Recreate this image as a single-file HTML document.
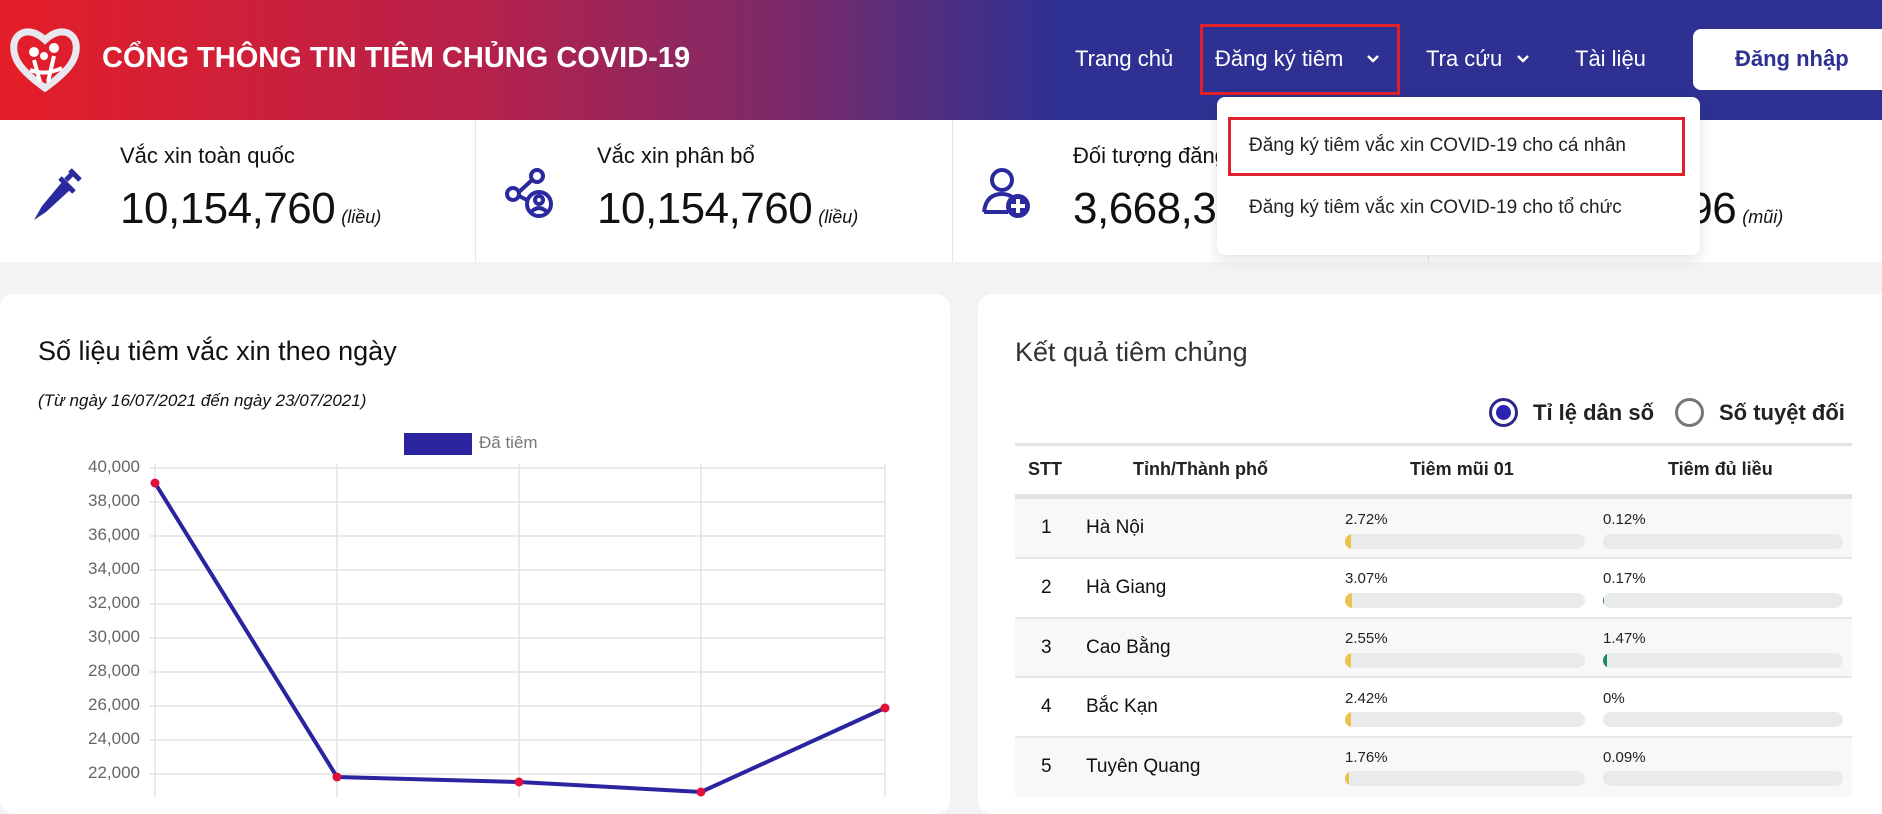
<!DOCTYPE html>
<html><head><meta charset="utf-8"><style>
*{margin:0;padding:0;box-sizing:border-box}
body{width:1882px;height:797px;overflow:hidden;background:#f3f3f5;font-family:"Liberation Sans",sans-serif;position:relative;color:#111}
.abs{position:absolute;white-space:nowrap}
.hdr{position:absolute;left:0;top:0;width:1882px;height:120px;background:linear-gradient(90deg,#e41e28 0%,#b8214a 25%,#7a2a6a 42%,#2e3192 56%,#2e3192 100%)}
.nav{color:#fff;font-size:22px;top:46px}
.stats{position:absolute;left:0;top:120px;width:1882px;height:142px;background:#fff}
.sep{position:absolute;top:0;width:1px;height:142px;background:#e6e6e6}
.lbl{font-size:22px;top:143px;color:#111}
.num{font-size:44px;top:184px;color:#111;letter-spacing:-0.5px}
.num i{font-size:18px;letter-spacing:0;margin-left:6px}
.card{position:absolute;background:#fff;border-radius:14px}
.yl{font-size:17px;color:#666;width:100px;text-align:right;left:40px}
.th{font-size:18px;font-weight:bold;top:459px;color:#222}
.pct{font-size:15px;color:#222}
.bar{position:absolute;height:15px;width:240px;background:#e9eaec;border-radius:8px;overflow:hidden}
.bar b{position:absolute;left:0;top:0;height:15px;border-radius:8px 0 0 8px}
</style></head><body>
<div class="hdr"></div>
<svg class="abs" style="left:10px;top:26px" width="70" height="66" viewBox="0 0 70 66">
<path d="M35 62 C10 44 2 32 4 18 C6 6 20 0 35 14 C50 0 64 6 66 18 C68 32 60 44 35 62Z" fill="none" stroke="#e8e8ee" stroke-width="7"/>
<circle cx="24" cy="26" r="5" fill="#fff"/><circle cx="44" cy="22" r="5" fill="#fff"/><circle cx="34" cy="30" r="4" fill="#fff"/>
<path d="M24 34 L30 56 M44 30 L38 56 M20 44 Q35 50 52 42" stroke="#fff" stroke-width="4" fill="none"/>
</svg>
<div class="abs" style="left:102px;top:42px;color:#fff;font-size:29px;font-weight:bold">CỔNG THÔNG TIN TIÊM CHỦNG COVID-19</div>
<div class="abs nav" style="left:1075px">Trang chủ</div>
<div class="abs nav" style="left:1215px">Đăng ký tiêm</div>
<div class="abs" style="left:1200px;top:24px;width:200px;height:71px;border:3px solid #e0202a"></div>
<div class="abs nav" style="left:1426px">Tra cứu</div>
<div class="abs nav" style="left:1575px">Tài liệu</div>
<svg class="abs" style="left:1366px;top:54px" width="14" height="10"><path d="M2 2 L7 7 L12 2" stroke="#fff" stroke-width="2.5" fill="none"/></svg>
<svg class="abs" style="left:1516px;top:54px" width="14" height="10"><path d="M2 2 L7 7 L12 2" stroke="#fff" stroke-width="2.5" fill="none"/></svg>
<div class="abs" style="left:1693px;top:29px;width:200px;height:61px;background:#fff;border-radius:8px;color:#2e3192;font-size:22px;font-weight:bold;padding:17px 0 0 42px">Đăng nhập</div>

<div class="stats">
<div class="sep" style="left:475px"></div><div class="sep" style="left:952px"></div><div class="sep" style="left:1428px"></div>
</div>
<svg class="abs" style="left:26px;top:166px" width="58" height="58" viewBox="0 0 58 58"><path d="M8 54 L16 40 L36 16 L44 24 L20 46 Z" fill="#2a2a9e"/><path d="M34 12 L48 26 M40 14 L46 8 M44 4 L54 14" stroke="#2a2a9e" stroke-width="5" fill="none"/></svg>
<div class="abs lbl" style="left:120px">Vắc xin toàn quốc</div>
<div class="abs num" style="left:120px">10,154,760<i>(liều)</i></div>
<svg class="abs" style="left:503px;top:166px" width="56" height="56" viewBox="0 0 56 56" fill="none" stroke="#2a2a9e" stroke-width="4"><circle cx="34" cy="10" r="6"/><circle cx="10" cy="28" r="6"/><circle cx="36" cy="38" r="12"/><circle cx="36" cy="34" r="4"/><path d="M28 46 Q36 38 44 46"/><path d="M16 26 L29 14 M16 30 L24 34"/></svg>
<div class="abs lbl" style="left:597px">Vắc xin phân bổ</div>
<div class="abs num" style="left:597px">10,154,760<i>(liều)</i></div>
<svg class="abs" style="left:978px;top:164px" width="56" height="56" viewBox="0 0 56 56"><circle cx="24" cy="16" r="10" fill="none" stroke="#2a2a9e" stroke-width="4"/><path d="M6 48 Q8 30 24 30 Q30 30 34 33 M6 48 L30 48" fill="none" stroke="#2a2a9e" stroke-width="4"/><circle cx="40" cy="42" r="12" fill="#2a2a9e"/><path d="M40 35 V49 M33 42 H47" stroke="#fff" stroke-width="4"/></svg>
<div class="abs lbl" style="left:1073px">Đối tượng đăng ký tiêm</div>
<div class="abs num" style="left:1073px">3,668,384<i>(người)</i></div>
<div class="abs lbl" style="left:1550px">Số mũi đã tiêm</div>
<div class="abs num" style="left:1545px">4,358,396<i>(mũi)</i></div>

<div class="abs" style="left:1217px;top:97px;width:483px;height:158px;background:#fff;border-radius:8px;box-shadow:0 4px 14px rgba(0,0,0,.12)"></div>
<div class="abs" style="left:1228px;top:117px;width:457px;height:59px;border:3px solid #e0202a"></div>
<div class="abs" style="left:1249px;top:135px;font-size:19px;color:#222">Đăng ký tiêm vắc xin COVID-19 cho cá nhân</div>
<div class="abs" style="left:1249px;top:197px;font-size:19px;color:#222">Đăng ký tiêm vắc xin COVID-19 cho tổ chức</div>

<div class="card" style="left:0;top:294px;width:950px;height:520px"></div>
<div class="abs" style="left:38px;top:336px;font-size:27px;color:#111">Số liệu tiêm vắc xin theo ngày</div>
<div class="abs" style="left:38px;top:391px;font-size:17px;font-style:italic;color:#111">(Từ ngày 16/07/2021 đến ngày 23/07/2021)</div>
<div class="abs" style="left:404px;top:433px;width:68px;height:22px;background:#2a24a0"></div>
<div class="abs" style="left:479px;top:433px;font-size:17px;color:#777">Đã tiêm</div>
<svg class="abs" style="left:0;top:0" width="950" height="797">
<g stroke="#e4e4e4" stroke-width="1.5">
<line x1="150" y1="468" x2="885" y2="468"/><line x1="150" y1="502" x2="885" y2="502"/><line x1="150" y1="536" x2="885" y2="536"/><line x1="150" y1="570" x2="885" y2="570"/><line x1="150" y1="604" x2="885" y2="604"/><line x1="150" y1="638" x2="885" y2="638"/><line x1="150" y1="672" x2="885" y2="672"/><line x1="150" y1="706" x2="885" y2="706"/><line x1="150" y1="740" x2="885" y2="740"/><line x1="150" y1="774" x2="885" y2="774"/>
<line x1="155" y1="464" x2="155" y2="797"/><line x1="337" y1="464" x2="337" y2="797"/><line x1="519" y1="464" x2="519" y2="797"/><line x1="701" y1="464" x2="701" y2="797"/><line x1="885" y1="464" x2="885" y2="797"/>
</g>
<polyline points="155,483 337,777 519,782 701,792 885,708" fill="none" stroke="#2a24a0" stroke-width="4"/>
<g fill="#e0103a"><circle cx="155" cy="483" r="4.5"/><circle cx="337" cy="777" r="4.5"/><circle cx="519" cy="782" r="4.5"/><circle cx="701" cy="792" r="4.5"/><circle cx="885" cy="708" r="4.5"/></g>
</svg>
<div class="abs yl" style="top:457px">40,000</div><div class="abs yl" style="top:491px">38,000</div><div class="abs yl" style="top:525px">36,000</div><div class="abs yl" style="top:559px">34,000</div><div class="abs yl" style="top:593px">32,000</div><div class="abs yl" style="top:627px">30,000</div><div class="abs yl" style="top:661px">28,000</div><div class="abs yl" style="top:695px">26,000</div><div class="abs yl" style="top:729px">24,000</div><div class="abs yl" style="top:763px">22,000</div>

<div class="card" style="left:978px;top:294px;width:920px;height:520px"></div>
<div class="abs" style="left:1015px;top:337px;font-size:27px;color:#333">Kết quả tiêm chủng</div>
<div class="abs" style="left:1489px;top:398px;width:29px;height:29px;border:3px solid #2a2a8a;border-radius:50%"></div>
<div class="abs" style="left:1496px;top:405px;width:15px;height:15px;background:#2a24b0;border-radius:50%"></div>
<div class="abs" style="left:1533px;top:400px;font-size:22px;font-weight:bold;color:#222">Tỉ lệ dân số</div>
<div class="abs" style="left:1675px;top:398px;width:29px;height:29px;border:3px solid #777;border-radius:50%"></div>
<div class="abs" style="left:1719px;top:400px;font-size:22px;font-weight:bold;color:#222">Số tuyệt đối</div>
<div class="abs" style="left:1015px;top:443px;width:837px;height:3px;background:#e4e4e6"></div>
<div class="abs th" style="left:1028px">STT</div>
<div class="abs th" style="left:1133px">Tỉnh/Thành phố</div>
<div class="abs th" style="left:1410px">Tiêm mũi 01</div>
<div class="abs th" style="left:1668px">Tiêm đủ liều</div>
<div class="abs" style="left:1015px;top:494px;width:837px;height:5px;background:#e2e2e6"></div>

<div class="abs" style="left:1015px;top:499px;width:837px;height:58px;background:#f8f8f9"></div>
<div class="abs" style="left:1015px;top:557px;width:837px;height:2px;background:#e6e6e8"></div>
<div class="abs" style="left:1015px;top:617px;width:837px;height:2px;background:#e6e6e8"></div>
<div class="abs" style="left:1015px;top:619px;width:837px;height:57px;background:#f8f8f9"></div>
<div class="abs" style="left:1015px;top:676px;width:837px;height:2px;background:#e6e6e8"></div>
<div class="abs" style="left:1015px;top:736px;width:837px;height:2px;background:#e6e6e8"></div>
<div class="abs" style="left:1015px;top:738px;width:837px;height:59px;background:#f8f8f9"></div>

<div class="abs" style="left:1041px;top:517px;font-size:19px">1</div><div class="abs" style="left:1086px;top:517px;font-size:19px">Hà Nội</div>
<div class="abs" style="left:1041px;top:577px;font-size:19px">2</div><div class="abs" style="left:1086px;top:577px;font-size:19px">Hà Giang</div>
<div class="abs" style="left:1041px;top:637px;font-size:19px">3</div><div class="abs" style="left:1086px;top:637px;font-size:19px">Cao Bằng</div>
<div class="abs" style="left:1041px;top:696px;font-size:19px">4</div><div class="abs" style="left:1086px;top:696px;font-size:19px">Bắc Kạn</div>
<div class="abs" style="left:1041px;top:756px;font-size:19px">5</div><div class="abs" style="left:1086px;top:756px;font-size:19px">Tuyên Quang</div>

<div class="abs pct" style="left:1345px;top:511px">2.72%</div><div class="bar" style="left:1345px;top:534px"><b style="width:6px;background:#ecc24e"></b></div>
<div class="abs pct" style="left:1603px;top:511px">0.12%</div><div class="bar" style="left:1603px;top:534px"></div>
<div class="abs pct" style="left:1345px;top:570px">3.07%</div><div class="bar" style="left:1345px;top:593px"><b style="width:7px;background:#ecc24e"></b></div>
<div class="abs pct" style="left:1603px;top:570px">0.17%</div><div class="bar" style="left:1603px;top:593px"><b style="width:1px;background:#1a8a5a"></b></div>
<div class="abs pct" style="left:1345px;top:630px">2.55%</div><div class="bar" style="left:1345px;top:653px"><b style="width:6px;background:#ecc24e"></b></div>
<div class="abs pct" style="left:1603px;top:630px">1.47%</div><div class="bar" style="left:1603px;top:653px"><b style="width:4px;background:#1a8a5a"></b></div>
<div class="abs pct" style="left:1345px;top:690px">2.42%</div><div class="bar" style="left:1345px;top:712px"><b style="width:6px;background:#ecc24e"></b></div>
<div class="abs pct" style="left:1603px;top:690px">0%</div><div class="bar" style="left:1603px;top:712px"></div>
<div class="abs pct" style="left:1345px;top:749px">1.76%</div><div class="bar" style="left:1345px;top:771px"><b style="width:4px;background:#ecc24e"></b></div>
<div class="abs pct" style="left:1603px;top:749px">0.09%</div><div class="bar" style="left:1603px;top:771px"></div>
</body></html>
